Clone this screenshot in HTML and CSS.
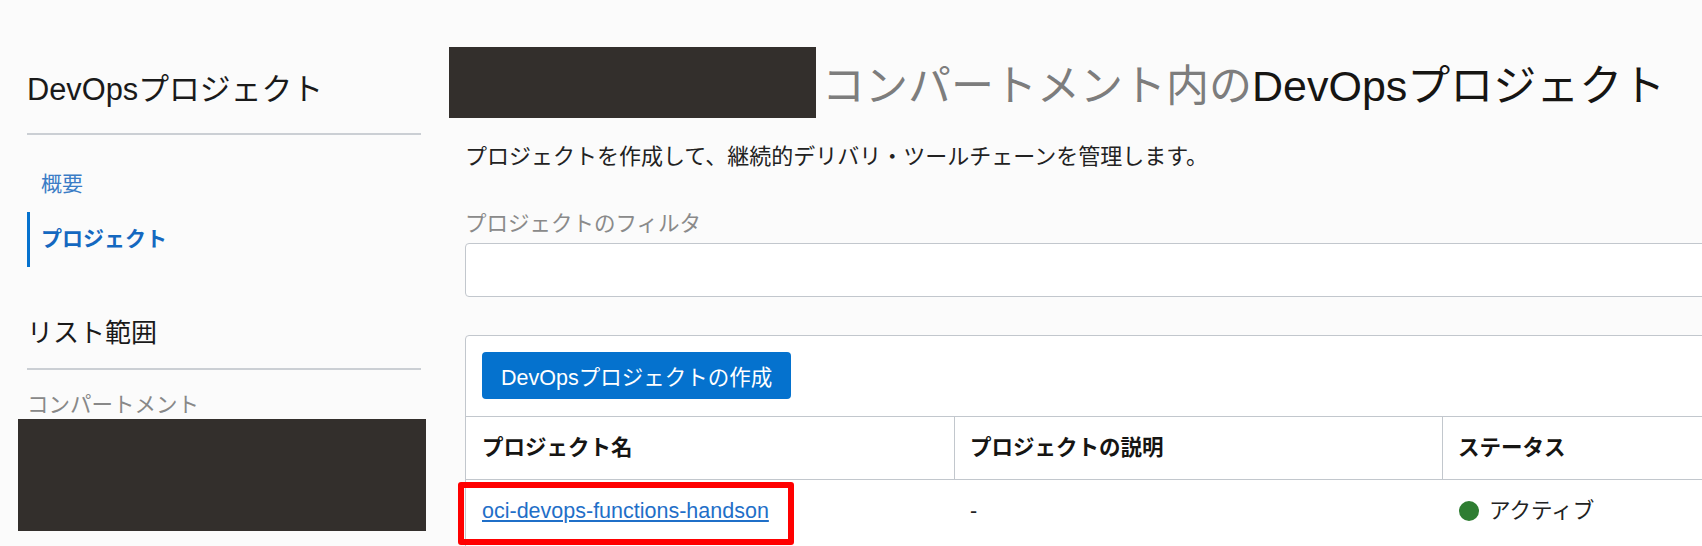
FILE: index.html
```html
<!DOCTYPE html>
<html lang="ja">
<head>
<meta charset="utf-8">
<title>DevOpsプロジェクト</title>
<link rel="stylesheet" href="styles.css">
</head>
<body>
<div class="page">
  <aside class="sidebar">
    <h2 class="side-title">DevOpsプロジェクト</h2>
    <div class="side-rule"></div>
    <nav class="side-nav">
      <a class="nav-item">概要</a>
      <a class="nav-item active">プロジェクト</a>
    </nav>
    <h3 class="scope-title">リスト範囲</h3>
    <div class="side-rule rule-2"></div>
    <div class="scope-label">コンパートメント</div>
    <div class="redact redact-side"></div>
  </aside>
  <main class="main">
    <div class="heading">
      <div class="redact redact-head"></div>
      <h1 class="title"><span class="muted">コンパートメント内の</span>DevOpsプロジェクト</h1>
    </div>
    <div class="content">
      <p class="desc">プロジェクトを作成して、継続的デリバリ・ツールチェーンを管理します。</p>
      <label class="filter-label">プロジェクトのフィルタ</label>
      <div class="filter-input"></div>
      <div class="table-card">
        <div class="toolbar">
          <button class="btn-primary">DevOpsプロジェクトの作成</button>
        </div>
        <div class="row head">
          <div class="cell">プロジェクト名</div>
          <div class="cell sep">プロジェクトの説明</div>
          <div class="cell sep">ステータス</div>
        </div>
        <div class="row body">
          <div class="cell name-cell">
            <a class="link">oci-devops-functions-handson</a>
            <span class="highlight"></span>
          </div>
          <div class="cell">-</div>
          <div class="cell status"><span class="dot"></span>アクティブ</div>
        </div>
      </div>
    </div>
  </main>
</div>
</body>
</html>
```

FILE: styles.css
```css
html, body {
  margin: 0;
  padding: 0;
  overflow: hidden;
}

body {
  background: #fbfbfb;
  font-family: "Liberation Sans", "Noto Sans CJK JP", sans-serif;
  color: #1d1d1d;
  width: 1702px;
  height: 546px;
}

.page {
  display: flex;
  align-items: flex-start;
}

/* Sidebar */
.sidebar {
  margin-left: 27px;
  width: 394px;
  flex: none;
  display: flex;
  flex-direction: column;
}

.side-title {
  margin: 72px 0 0;
  font-size: 30.8px;
  line-height: 36px;
  font-weight: normal;
  color: #1a1a1a;
}

.side-rule {
  margin-top: 25px;
  height: 2px;
  background: #cbcfd4;
}

.side-nav {
  margin-top: 22px;
  display: flex;
  flex-direction: column;
}

.nav-item {
  display: block;
  font-size: 21px;
  line-height: 30px;
  padding: 12px 0 13px 11px;
  border-left: 3px solid transparent;
  color: #3a7cc6;
}

.nav-item.active {
  border-left-color: #0572ce;
  color: #1468c0;
  font-weight: bold;
}

.scope-title {
  margin: 50px 0 0;
  font-size: 26px;
  line-height: 32px;
  font-weight: normal;
  color: #1a1a1a;
}

.rule-2 {
  margin-top: 19px;
}

.scope-label {
  margin-top: 20px;
  font-size: 21.5px;
  line-height: 30px;
  color: #888888;
}

.redact {
  background: #332f2c;
}

.redact-side {
  margin-top: -1px;
  margin-left: -9px;
  width: 408px;
  height: 112px;
}

/* Main */
.main {
  margin-left: 28px;
  padding-top: 47px;
  flex: none;
  width: 1320px;
}

.heading {
  display: flex;
  align-items: flex-start;
}

.redact-head {
  width: 367px;
  height: 71px;
  flex: none;
}

.title {
  margin: 14px 0 0 6px;
  font-size: 43px;
  line-height: 50px;
  font-weight: normal;
  color: #161513;
  white-space: nowrap;
}

.title .muted {
  color: #7d7d7d;
}

.content {
  padding-left: 16px;
  width: 1300px;
}

.desc {
  margin: 24px 0 0;
  font-size: 22px;
  line-height: 30px;
  color: #222222;
}

.filter-label {
  display: block;
  margin-top: 37px;
  font-size: 21.5px;
  line-height: 30px;
  color: #8a8a8a;
}

.filter-input {
  margin-top: 4px;
  height: 52px;
  background: #ffffff;
  border: 1px solid #c2c7cd;
  border-radius: 4px;
}

.table-card {
  margin-top: 38px;
  background: #ffffff;
  border: 1px solid #c2c7cd;
  border-radius: 4px 0 0 0;
}

.toolbar {
  padding: 16px 16px 17px;
}

.btn-primary {
  display: block;
  height: 47px;
  padding: 0 19px;
  border: none;
  border-radius: 4px;
  background: #0572ce;
  color: #ffffff;
  font-family: inherit;
  font-size: 21.5px;
}

.row {
  display: grid;
  grid-template-columns: 488px 488px 1fr;
  height: 62px;
}

.row.head {
  border-top: 1px solid #c2c7cd;
  border-bottom: 1px solid #c2c7cd;
  font-weight: bold;
  color: #161513;
}

.row.body {
  height: 72px;
  align-items: start;
}

.cell {
  display: flex;
  align-items: center;
  padding-left: 16px;
  font-size: 21.5px;
  line-height: 30px;
}

.row.body .cell {
  height: 62px;
  color: #222222;
}

.row.head .cell.sep {
  border-left: 1px solid #c2c7cd;
  padding-left: 15px;
}

.name-cell {
  position: relative;
}

.link {
  color: #1f6fc8;
  text-decoration: underline;
}

.highlight {
  position: absolute;
  left: -8px;
  top: 2px;
  width: 336px;
  height: 63px;
  box-sizing: border-box;
  border: 6px solid #ff0000;
  border-radius: 3px;
}

.status {
  gap: 10px;
  padding-left: 17px;
}

.dot {
  width: 20px;
  height: 20px;
  border-radius: 50%;
  background: #2e7d32;
  flex: none;
}
```
